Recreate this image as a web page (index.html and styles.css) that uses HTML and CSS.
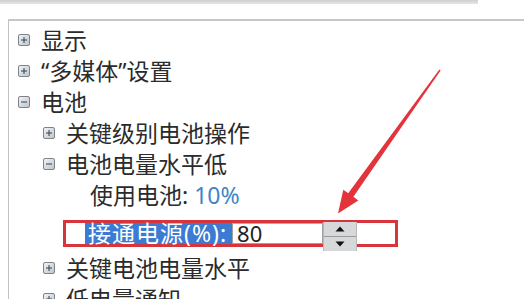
FILE: index.html
```html
<!DOCTYPE html>
<html lang="zh-CN">
<head>
<meta charset="utf-8">
<title>电源选项</title>
<link rel="stylesheet" href="styles.css">
</head>
<body>
<div class="strip"></div>
<div class="panel">
  <div class="row lv0">
    <svg class="exp" viewBox="0 0 12 12"><defs><linearGradient id="g" x1="0" y1="0" x2="1" y2="1"><stop offset="0" stop-color="#f3f5f7"/><stop offset="1" stop-color="#bcc3cb"/></linearGradient></defs><rect x="0.5" y="0.5" width="11" height="11" rx="1.5" fill="url(#g)" stroke="#7f8387"/><path d="M3 6h6M6 3v6" stroke="#33404e" stroke-width="1"/></svg>
    <span class="label">显示</span>
  </div>
  <div class="row lv0">
    <svg class="exp" viewBox="0 0 12 12"><rect x="0.5" y="0.5" width="11" height="11" rx="1.5" fill="url(#g)" stroke="#7f8387"/><path d="M3 6h6M6 3v6" stroke="#33404e" stroke-width="1"/></svg>
    <span class="label">“多媒体”设置</span>
  </div>
  <div class="row lv0">
    <svg class="exp" viewBox="0 0 12 12"><rect x="0.5" y="0.5" width="11" height="11" rx="1.5" fill="url(#g)" stroke="#7f8387"/><path d="M3 6h6" stroke="#33404e" stroke-width="1"/></svg>
    <span class="label">电池</span>
  </div>
  <div class="row lv1">
    <svg class="exp" viewBox="0 0 12 12"><rect x="0.5" y="0.5" width="11" height="11" rx="1.5" fill="url(#g)" stroke="#7f8387"/><path d="M3 6h6M6 3v6" stroke="#33404e" stroke-width="1"/></svg>
    <span class="label">关键级别电池操作</span>
  </div>
  <div class="row lv1">
    <svg class="exp" viewBox="0 0 12 12"><rect x="0.5" y="0.5" width="11" height="11" rx="1.5" fill="url(#g)" stroke="#7f8387"/><path d="M3 6h6" stroke="#33404e" stroke-width="1"/></svg>
    <span class="label">电池电量水平低</span>
  </div>
  <div class="row lv2">
    <span class="label">使用电池: <span class="value">10%</span></span>
  </div>
  <div class="row input-row">
    <div class="annot">
      <span class="selected">接通电源(%):</span>
      <span class="field">80</span>
      <span class="spin">
        <span class="spin-btn"><svg viewBox="0 0 10 6"><path d="M0.5 5.5L5 0.5L9.5 5.5Z" fill="#111"/></svg></span>
        <span class="spin-btn"><svg viewBox="0 0 10 6"><path d="M0.5 0.5L5 5.5L9.5 0.5Z" fill="#111"/></svg></span>
      </span>
    </div>
  </div>
  <div class="row lv1">
    <svg class="exp" viewBox="0 0 12 12"><rect x="0.5" y="0.5" width="11" height="11" rx="1.5" fill="url(#g)" stroke="#7f8387"/><path d="M3 6h6M6 3v6" stroke="#33404e" stroke-width="1"/></svg>
    <span class="label">关键电池电量水平</span>
  </div>
  <div class="row lv1">
    <svg class="exp" viewBox="0 0 12 12"><rect x="0.5" y="0.5" width="11" height="11" rx="1.5" fill="url(#g)" stroke="#7f8387"/><path d="M3 6h6M6 3v6" stroke="#33404e" stroke-width="1"/></svg>
    <span class="label">低电量通知</span>
  </div>
</div>
<svg class="arrow" viewBox="0 0 524 299" width="524" height="299">
  <polygon points="439.4,69.6 440.6,70.4 353.4,196.8 358.3,200.4 338,213.5 343.3,189.8 348.2,193.2" fill="#e3343b"/>
</svg>
</body>
</html>
```
FILE: styles.css
```css
html, body {
  margin: 0;
  padding: 0;
  background: #ffffff;
  width: 524px;
  height: 299px;
  overflow: hidden;
}
body {
  position: relative;
  font-family: "Noto Sans", "Noto Sans CJK SC", sans-serif;
  color: #2b2b2b;
}
.strip {
  width: 478px;
  height: 4px;
  background: linear-gradient(#cfcfcf, #e6e6e6);
}
.panel {
  margin-top: 15px;
  margin-left: 8px;
  border-top: 2px solid #c6c6c6;
  border-left: 1px solid #c2c2c2;
  padding-top: 4px;
  padding-left: 9px;
  height: 300px;
}
.row {
  display: flex;
  align-items: center;
  height: 31px;
  font-size: 23px;
  white-space: nowrap;
}
.lv0 { padding-left: 0; }
.lv1 { padding-left: 25px; }
.lv2 { padding-left: 72px; }
.exp {
  width: 12px;
  height: 12px;
  flex: none;
  margin-right: 11px;
  margin-top: -2px;
}
.label {
  line-height: 31px;
}
.value {
  color: #3a86c8;
}
.input-row {
  height: 42px;
  padding-top: 2px;
  box-sizing: border-box;
}
.annot {
  margin-left: 45px;
  width: 335px;
  height: 27px;
  box-sizing: border-box;
  border: 3px solid #d8343c;
  display: flex;
  align-items: stretch;
  padding-left: 19px;
}
.selected {
  background: #3b7bd3;
  color: #ffffff;
  padding: 0 5px 0 3px;
  letter-spacing: 1px;
  font-size: 23px;
  line-height: 21px;
  display: flex;
  align-items: center;
}
.field {
  width: 91px;
  box-sizing: border-box;
  border: 1px solid #a0a0a0;
  border-top-color: #c9a0a0;
  background: #fff;
  color: #222;
  font-size: 22px;
  line-height: 19px;
  padding-left: 4px;
  display: flex;
  align-items: center;
}
.spin {
  width: 34px;
  height: 29px;
  margin-top: -1px;
  box-sizing: border-box;
  background: #d6d8d9;
  border-left: 1px solid #b8b8b8;
  border-right: 1px solid #b8b8b8;
  display: flex;
  flex-direction: column;
}
.spin-btn {
  flex: 1;
  display: flex;
  align-items: center;
  justify-content: center;
}
.spin-btn + .spin-btn {
  border-top: 1px solid #9c9c9c;
}
.spin-btn svg {
  width: 10px;
  height: 6px;
}
.arrow {
  position: absolute;
  left: 0;
  top: 0;
  pointer-events: none;
}
```
